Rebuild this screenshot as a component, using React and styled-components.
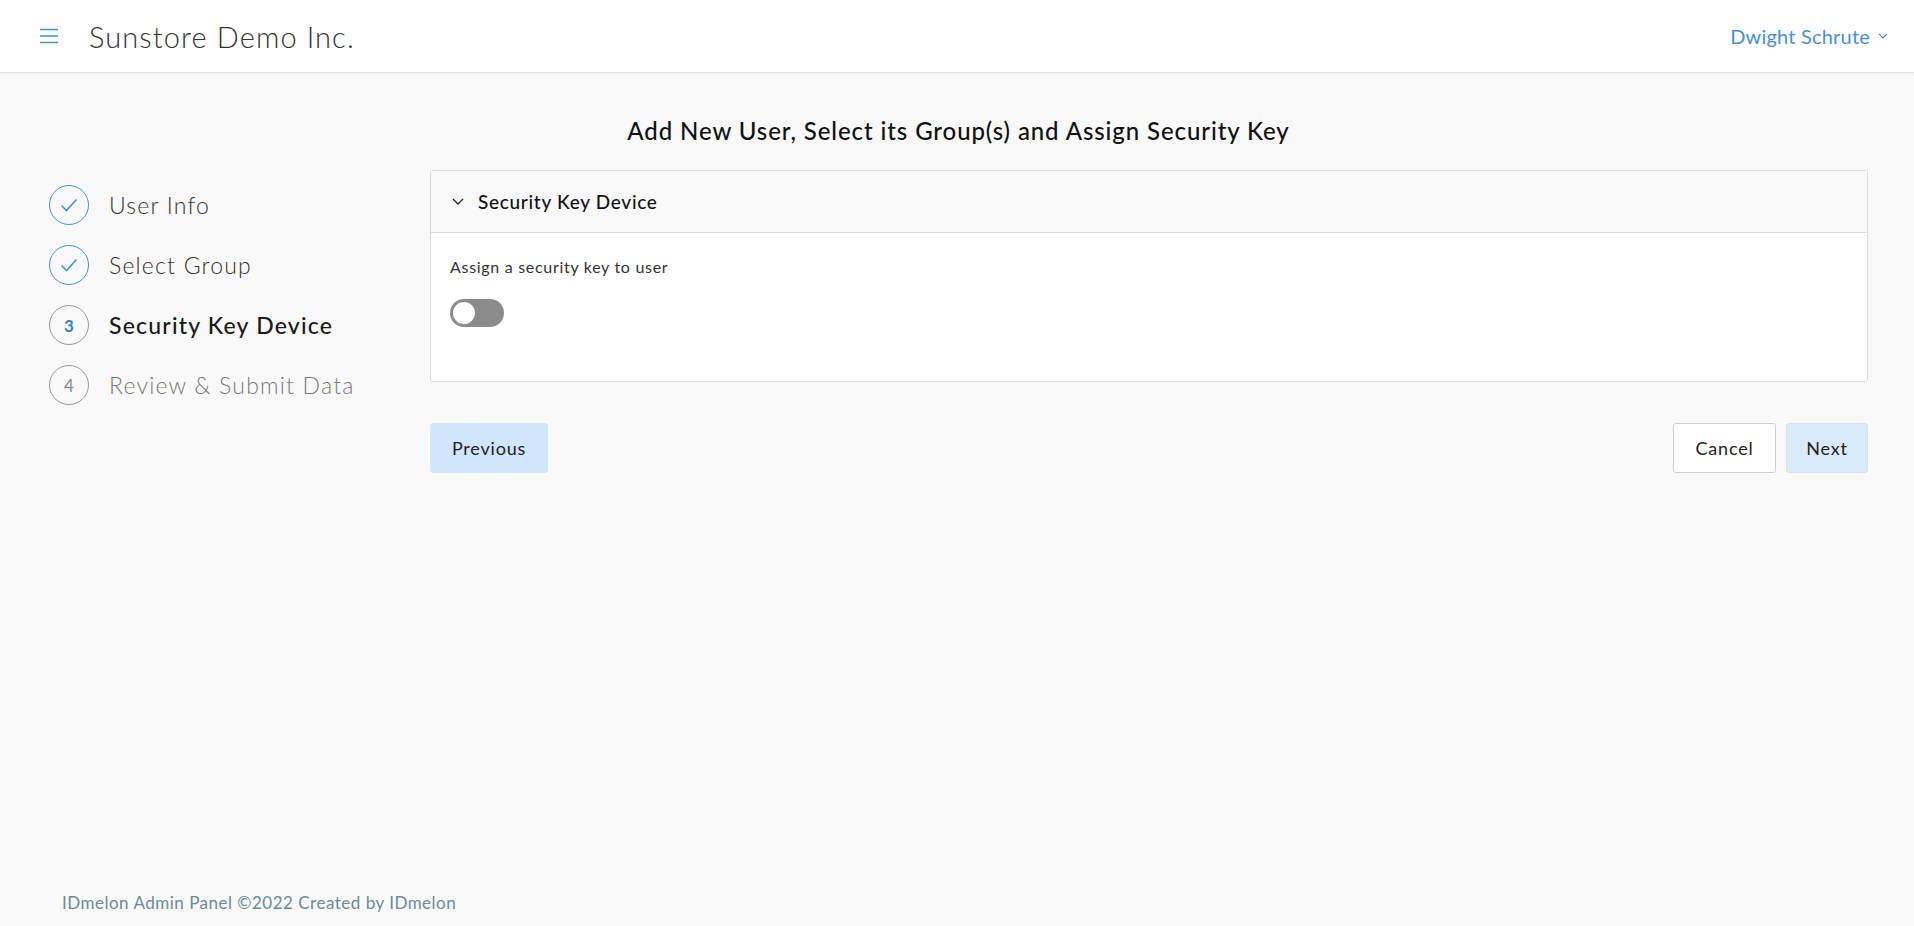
import React from "react";
import styled, { createGlobalStyle } from "styled-components";

const GlobalStyle = createGlobalStyle`
  html, body {
    margin: 0;
    padding: 0;
    background: #f9f9f9;
    font-family: Lato, "Open Sans", sans-serif;
    color: #333;
  }
  * { box-sizing: border-box; }
`;

const steps = [
  { label: "User Info", state: "done" },
  { label: "Select Group", state: "done" },
  { label: "Security Key Device", state: "active" },
  { label: "Review & Submit Data", state: "todo" },
];

export default function App() {
  return (
    <Page>
      <GlobalStyle />
      <Header>
        <Brand>
          <MenuButton aria-label="menu">
            <svg width="18" height="18" viewBox="0 0 18 18">
              <path d="M0 2.5h18M0 9h18M0 15.5h18" stroke="#4a8fd4" strokeWidth="1.6" />
            </svg>
          </MenuButton>
          <CompanyName>Sunstore Demo Inc.</CompanyName>
        </Brand>
        <UserMenu>
          Dwight Schrute
          <svg width="10" height="6" viewBox="0 0 10 6">
            <path d="M1 1l4 4 4-4" fill="none" stroke="#4a8fd4" strokeWidth="1.2" />
          </svg>
        </UserMenu>
      </Header>

      <Main>
        <PageTitle>Add New User, Select its Group(s) and Assign Security Key</PageTitle>
        <Layout>
          <Stepper>
            {steps.map((s, i) => (
              <Step key={s.label}>
                <StepCircle state={s.state}>
                  {s.state === "done" ? (
                    <svg width="18" height="14" viewBox="0 0 18 14">
                      <path d="M1.5 7.5l5 5L16.5 1.5" fill="none" stroke="#4a8fd4" strokeWidth="1.6" />
                    </svg>
                  ) : (
                    i + 1
                  )}
                </StepCircle>
                <StepLabel state={s.state}>{s.label}</StepLabel>
              </Step>
            ))}
          </Stepper>

          <Content>
            <Panel>
              <PanelHeader>
                <svg width="12" height="7" viewBox="0 0 12 7">
                  <path d="M1 1l5 5 5-5" fill="none" stroke="#222" strokeWidth="1.3" />
                </svg>
                <PanelTitle>Security Key Device</PanelTitle>
              </PanelHeader>
              <PanelBody>
                <FieldLabel>Assign a security key to user</FieldLabel>
                <Toggle role="switch" aria-checked="false">
                  <Knob />
                </Toggle>
              </PanelBody>
            </Panel>

            <Actions>
              <Button variant="primary">Previous</Button>
              <ButtonGroup>
                <Button variant="outline">Cancel</Button>
                <Button variant="light">Next</Button>
              </ButtonGroup>
            </Actions>
          </Content>
        </Layout>
      </Main>

      <Footer>IDmelon Admin Panel ©2022 Created by IDmelon</Footer>
    </Page>
  );
}

const Page = styled.div`
  min-height: 100vh;
  display: flex;
  flex-direction: column;
`;

const Header = styled.header`
  height: 73px;
  background: #fff;
  border-bottom: 1px solid #e2e2e2;
  box-shadow: 0 1px 3px rgba(0, 0, 0, 0.05);
  display: flex;
  align-items: center;
  justify-content: space-between;
  padding: 0 26px 0 40px;
`;

const Brand = styled.div`
  display: flex;
  align-items: center;
  gap: 31px;
`;

const MenuButton = styled.span`
  display: flex;
  width: 18px;
  height: 18px;
`;

const CompanyName = styled.div`
  font-size: 29px;
  font-weight: 300;
  color: #333;
  letter-spacing: 1.1px;
`;

const UserMenu = styled.div`
  display: flex;
  align-items: center;
  gap: 8px;
  font-size: 20px;
  color: #4a8fd4;
  font-weight: 400;
  letter-spacing: 0.2px;
`;

const Main = styled.main`
  padding: 0 46px 0 49px;
`;

const PageTitle = styled.h1`
  margin: 0;
  padding-top: 43px;
  text-align: center;
  font-size: 24px;
  line-height: 30px;
  font-weight: 500;
  letter-spacing: 0.9px;
  color: #111;
`;

const Layout = styled.div`
  display: grid;
  grid-template-columns: 381px 1fr;
  margin-top: 24px;
`;

const Stepper = styled.ol`
  list-style: none;
  margin: 15px 0 0;
  padding: 0;
  display: flex;
  flex-direction: column;
  gap: 20px;
`;

const Step = styled.li`
  display: flex;
  align-items: center;
  gap: 20px;
`;

const StepCircle = styled.span`
  width: 40px;
  height: 40px;
  border-radius: 50%;
  display: flex;
  align-items: center;
  justify-content: center;
  flex-shrink: 0;
  border: 1px solid ${(p) => (p.state === "done" ? "#4a8fd4" : "#9a9a9a")};
  color: ${(p) => (p.state === "active" ? "#3e7fc4" : "#888")};
  font-weight: ${(p) => (p.state === "active" ? 700 : 400)};
  font-size: 17px;
`;

const StepLabel = styled.span`
  font-size: 23px;
  letter-spacing: 1.2px;
  font-weight: ${(p) => (p.state === "active" ? 500 : 300)};
  color: ${(p) =>
    p.state === "active" ? "#1a1a1a" : p.state === "todo" ? "#7a7a7a" : "#333"};
`;

const Content = styled.section`
  display: flex;
  flex-direction: column;
`;

const Panel = styled.div`
  border: 1px solid #dcdcdc;
  border-radius: 3px;
  background: #fff;
`;

const PanelHeader = styled.div`
  height: 62px;
  background: #f9f9f9;
  border-bottom: 1px solid #dcdcdc;
  display: flex;
  align-items: center;
  gap: 14px;
  padding: 0 0 0 21px;
`;

const PanelTitle = styled.span`
  font-size: 19px;
  font-weight: 500;
  letter-spacing: 0.7px;
  color: #111;
`;

const PanelBody = styled.div`
  height: 148px;
  padding: 24px 19px;
`;

const FieldLabel = styled.div`
  font-size: 16px;
  letter-spacing: 0.7px;
  color: #333;
  line-height: 20px;
`;

const Toggle = styled.div`
  margin-top: 22px;
  width: 54px;
  height: 28px;
  border-radius: 14px;
  background: #8c8c8c;
  padding: 3px;
  display: flex;
  align-items: center;
`;

const Knob = styled.span`
  width: 22px;
  height: 22px;
  border-radius: 50%;
  background: #fff;
`;

const Actions = styled.div`
  display: flex;
  justify-content: space-between;
  margin-top: 41px;
`;

const ButtonGroup = styled.div`
  display: flex;
  gap: 10px;
`;

const Button = styled.button`
  height: 50px;
  padding: 0 18px;
  font-family: inherit;
  font-size: 18px;
  letter-spacing: 0.8px;
  color: #222;
  border-radius: 3px;
  cursor: pointer;
  background: ${(p) =>
    p.variant === "outline" ? "#fff" : p.variant === "light" ? "#dbeafa" : "#cfe6fd"};
  border: 1px solid
    ${(p) =>
      p.variant === "outline" ? "#d0d0d0" : p.variant === "light" ? "#d0e4f8" : "#cfe6fd"};
  min-width: ${(p) => (p.variant === "primary" ? "118px" : p.variant === "light" ? "82px" : "103px")};
`;

const Footer = styled.footer`
  margin-top: auto;
  padding: 0 0 11px 62px;
  font-size: 17px;
  letter-spacing: 0.5px;
  line-height: 24px;
  color: #6c8a99;
`;
